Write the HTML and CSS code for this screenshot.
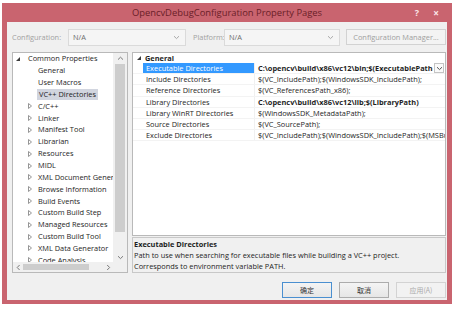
FILE: index.html
```html
<!DOCTYPE html>
<html>
<head>
<meta charset="utf-8">
<link rel="stylesheet" href="styles.css">
</head>
<body>
<div class="window">
  <div class="titlebar">
    <span></span>
    <span class="title">OpencvDebugConfiguration Property Pages</span>
    <span class="tb-controls"><span class="tb-help">?</span><span class="tb-close">×</span></span>
  </div>
  <div class="content">
    <div class="config-row">
      <span class="lbl">Configuration:</span>
      <div class="combo combo-config"><span>N/A</span><svg class="chev" width="7" height="5" viewBox="0 0 7 5"><path d="M1 1.2 L3.5 3.6 L6 1.2" fill="none" stroke="#a8a8a8" stroke-width="1"/></svg></div>
      <span class="lbl lbl-platform">Platform:</span>
      <div class="combo combo-platform"><span>N/A</span><svg class="chev" width="7" height="5" viewBox="0 0 7 5"><path d="M1 1.2 L3.5 3.6 L6 1.2" fill="none" stroke="#a8a8a8" stroke-width="1"/></svg></div>
      <div class="btn btn-cfgmgr">Configuration Manager...</div>
    </div>
    <div class="main">
      <div class="tree-panel">
        <div class="tree-view">
          <div class="tree-list">
            <div class="node lvl0"><svg class="tw" width="8" height="8" viewBox="0 0 8 8"><polygon points="6,2 6,6 2,6" fill="#3c3c3c"/></svg><span class="nt">Common Properties</span></div>
            <div class="node lvl1"><span class="tw-empty"></span><span class="nt">General</span></div>
            <div class="node lvl1"><span class="tw-empty"></span><span class="nt">User Macros</span></div>
            <div class="node lvl1"><span class="tw-empty"></span><span class="nt sel">VC++ Directories</span></div>
            <div class="node lvl1"><svg class="tw" width="8" height="8" viewBox="0 0 8 8"><polygon points="2.5,1.5 5.5,4 2.5,6.5" fill="none" stroke="#8a8a8a" stroke-width="0.9"/></svg><span class="nt">C/C++</span></div>
            <div class="node lvl1"><svg class="tw" width="8" height="8" viewBox="0 0 8 8"><polygon points="2.5,1.5 5.5,4 2.5,6.5" fill="none" stroke="#8a8a8a" stroke-width="0.9"/></svg><span class="nt">Linker</span></div>
            <div class="node lvl1"><svg class="tw" width="8" height="8" viewBox="0 0 8 8"><polygon points="2.5,1.5 5.5,4 2.5,6.5" fill="none" stroke="#8a8a8a" stroke-width="0.9"/></svg><span class="nt">Manifest Tool</span></div>
            <div class="node lvl1"><svg class="tw" width="8" height="8" viewBox="0 0 8 8"><polygon points="2.5,1.5 5.5,4 2.5,6.5" fill="none" stroke="#8a8a8a" stroke-width="0.9"/></svg><span class="nt">Librarian</span></div>
            <div class="node lvl1"><svg class="tw" width="8" height="8" viewBox="0 0 8 8"><polygon points="2.5,1.5 5.5,4 2.5,6.5" fill="none" stroke="#8a8a8a" stroke-width="0.9"/></svg><span class="nt">Resources</span></div>
            <div class="node lvl1"><svg class="tw" width="8" height="8" viewBox="0 0 8 8"><polygon points="2.5,1.5 5.5,4 2.5,6.5" fill="none" stroke="#8a8a8a" stroke-width="0.9"/></svg><span class="nt">MIDL</span></div>
            <div class="node lvl1"><svg class="tw" width="8" height="8" viewBox="0 0 8 8"><polygon points="2.5,1.5 5.5,4 2.5,6.5" fill="none" stroke="#8a8a8a" stroke-width="0.9"/></svg><span class="nt">XML Document Generator</span></div>
            <div class="node lvl1"><svg class="tw" width="8" height="8" viewBox="0 0 8 8"><polygon points="2.5,1.5 5.5,4 2.5,6.5" fill="none" stroke="#8a8a8a" stroke-width="0.9"/></svg><span class="nt">Browse Information</span></div>
            <div class="node lvl1"><svg class="tw" width="8" height="8" viewBox="0 0 8 8"><polygon points="2.5,1.5 5.5,4 2.5,6.5" fill="none" stroke="#8a8a8a" stroke-width="0.9"/></svg><span class="nt">Build Events</span></div>
            <div class="node lvl1"><svg class="tw" width="8" height="8" viewBox="0 0 8 8"><polygon points="2.5,1.5 5.5,4 2.5,6.5" fill="none" stroke="#8a8a8a" stroke-width="0.9"/></svg><span class="nt">Custom Build Step</span></div>
            <div class="node lvl1"><svg class="tw" width="8" height="8" viewBox="0 0 8 8"><polygon points="2.5,1.5 5.5,4 2.5,6.5" fill="none" stroke="#8a8a8a" stroke-width="0.9"/></svg><span class="nt">Managed Resources</span></div>
            <div class="node lvl1"><svg class="tw" width="8" height="8" viewBox="0 0 8 8"><polygon points="2.5,1.5 5.5,4 2.5,6.5" fill="none" stroke="#8a8a8a" stroke-width="0.9"/></svg><span class="nt">Custom Build Tool</span></div>
            <div class="node lvl1"><svg class="tw" width="8" height="8" viewBox="0 0 8 8"><polygon points="2.5,1.5 5.5,4 2.5,6.5" fill="none" stroke="#8a8a8a" stroke-width="0.9"/></svg><span class="nt">XML Data Generator</span></div>
            <div class="node lvl1"><svg class="tw" width="8" height="8" viewBox="0 0 8 8"><polygon points="2.5,1.5 5.5,4 2.5,6.5" fill="none" stroke="#8a8a8a" stroke-width="0.9"/></svg><span class="nt">Code Analysis</span></div>
          </div>
          <div class="vscroll">
            <div class="sb-arrow"><svg width="7" height="5" viewBox="0 0 7 5"><path d="M1 3.6 L3.5 1.2 L6 3.6" fill="none" stroke="#7a7a7a" stroke-width="1"/></svg></div>
            <div class="vthumb"></div>
            <div class="vtrack"></div>
            <div class="sb-arrow"><svg width="7" height="5" viewBox="0 0 7 5"><path d="M1 1.2 L3.5 3.6 L6 1.2" fill="none" stroke="#7a7a7a" stroke-width="1"/></svg></div>
          </div>
        </div>
        <div class="hscroll">
          <div class="sb-harrow"><svg width="5" height="7" viewBox="0 0 5 7"><path d="M3.6 1 L1.2 3.5 L3.6 6" fill="none" stroke="#7a7a7a" stroke-width="1"/></svg></div>
          <div class="hthumb"></div>
          <div class="htrack"></div>
          <div class="sb-harrow"><svg width="5" height="7" viewBox="0 0 5 7"><path d="M1.2 1 L3.6 3.5 L1.2 6" fill="none" stroke="#7a7a7a" stroke-width="1"/></svg></div>
          <div class="corner"></div>
        </div>
      </div>
      <div class="right-col">
        <div class="grid">
          <div class="cat"><svg class="tw" width="8" height="8" viewBox="0 0 8 8"><polygon points="6,2 6,6 2,6" fill="#3c3c3c"/></svg><span class="cat-name">General</span></div>
          <div class="prow selected"><span class="gutter"></span><span class="pname">Executable Directories</span><span class="pval bold">C:\opencv\build\x86\vc12\bin;$(ExecutablePath</span><span class="ddbtn"><svg width="7" height="5" viewBox="0 0 7 5"><path d="M1 1.2 L3.5 3.6 L6 1.2" fill="none" stroke="#555" stroke-width="1"/></svg></span></div>
          <div class="prow"><span class="gutter"></span><span class="pname">Include Directories</span><span class="pval">$(VC_IncludePath);$(WindowsSDK_IncludePath);</span></div>
          <div class="prow"><span class="gutter"></span><span class="pname">Reference Directories</span><span class="pval">$(VC_ReferencesPath_x86);</span></div>
          <div class="prow"><span class="gutter"></span><span class="pname">Library Directories</span><span class="pval bold">C:\opencv\build\x86\vc12\lib;$(LibraryPath)</span></div>
          <div class="prow"><span class="gutter"></span><span class="pname">Library WinRT Directories</span><span class="pval">$(WindowsSDK_MetadataPath);</span></div>
          <div class="prow"><span class="gutter"></span><span class="pname">Source Directories</span><span class="pval">$(VC_SourcePath);</span></div>
          <div class="prow"><span class="gutter"></span><span class="pname">Exclude Directories</span><span class="pval">$(VC_IncludePath);$(WindowsSDK_IncludePath);$(MSBuild_ExecutablePath);</span></div>
        </div>
        <div class="desc">
          <div class="desc-title">Executable Directories</div>
          <div class="desc-text">Path to use when searching for executable files while building a VC++ project.</div>
          <div class="desc-text">Corresponds to environment variable PATH.</div>
        </div>
      </div>
    </div>
    <div class="footer">
      <div class="btn dbtn default">确定</div>
      <div class="btn dbtn">取消</div>
      <div class="btn dbtn disabled">应用(A)</div>
    </div>
  </div>
</div>
</body>
</html>
```

FILE: styles.css
```css
* { box-sizing: border-box; }
html, body { margin: 0; padding: 0; background: #ffffff; }
body {
  font-family: "Open Sans", "Noto Sans CJK SC", sans-serif;
  font-size: 7.4px;
  color: #1e1e1e;
  width: 458px;
  height: 311px;
  overflow: hidden;
}
.window {
  margin: 3px 0 0 2px;
  width: 450px;
  height: 301px;
  background: #c9646f;
  padding: 0 5px 4px 5px;
  display: flex;
  flex-direction: column;
}
.titlebar {
  height: 19px;
  flex: none;
  display: grid;
  grid-template-columns: 1fr auto 1fr;
  align-items: center;
}
.title {
  font-size: 9.4px;
  color: #6a2028;
  white-space: nowrap;
}
.tb-controls {
  justify-self: end;
  display: flex;
  align-items: center;
  color: #fbe6e8;
  font-size: 9px;
  font-weight: 700;
}
.tb-help { width: 16px; text-align: center; }
.tb-close { width: 22px; text-align: center; font-size: 10px; }

.content {
  flex: 1;
  min-height: 0;
  background: #f0f0f0;
  padding: 6px 1px 0 5px;
  display: flex;
  flex-direction: column;
}
.config-row {
  height: 18px;
  flex: none;
  display: flex;
  align-items: center;
}
.lbl { color: #a2a2a2; width: 56px; flex: none; white-space: nowrap; }
.lbl-platform { width: 31px; margin-left: 7px; }
.combo {
  height: 17px;
  flex: none;
  border: 1px solid #dadada;
  background: #f5f5f5;
  display: flex;
  align-items: center;
  justify-content: space-between;
  padding: 0 5px 0 4px;
  color: #6e6e6e;
}
.combo-config { width: 118px; }
.combo-platform { width: 116px; }
.btn {
  display: flex;
  align-items: center;
  justify-content: center;
  border: 1px solid #d2d2d2;
  background: #f3f3f3;
  white-space: nowrap;
  flex: none;
}
.btn-cfgmgr {
  margin-left: auto;
  width: 100px;
  height: 16px;
  color: #a0a0a0;
}
.main {
  margin-top: 6px;
  height: 221px;
  flex: none;
  display: flex;
  gap: 4px;
}
.tree-panel {
  width: 116px;
  flex: none;
  border: 1px solid #b9b9b9;
  background: #ffffff;
  display: flex;
  flex-direction: column;
  overflow: hidden;
}
.tree-view {
  flex: 1;
  display: flex;
  min-height: 0;
}
.tree-list {
  flex: 1;
  min-width: 0;
  overflow: hidden;
}
.node {
  height: 11.85px;
  display: flex;
  align-items: center;
  white-space: nowrap;
  color: #1e1e1e;
}
.lvl0 { padding-left: 1px; }
.lvl0 .tw { margin-right: 5px; }
.lvl1 { padding-left: 13px; }
.lvl1 .tw, .tw-empty { width: 8px; margin-right: 3px; flex: none; }
.tw { flex: none; }
.nt { padding: 0 1px; line-height: 11px; }
.nt.sel { background: #d1d5df; padding: 0 2px; }
.vscroll {
  width: 14px;
  flex: none;
  display: flex;
  flex-direction: column;
  background: #f0f0f0;
}
.sb-arrow {
  height: 10px;
  flex: none;
  display: flex;
  align-items: center;
  justify-content: center;
}
.vthumb { margin: 1px 2px 0 2px; height: 168px; flex: none; background: #cdcdcd; }
.vtrack { flex: 1; }
.hscroll {
  height: 10px;
  flex: none;
  display: flex;
  background: #f0f0f0;
}
.sb-harrow {
  width: 10px;
  flex: none;
  display: flex;
  align-items: center;
  justify-content: center;
}
.hthumb { width: 66px; flex: none; margin: 2px 0; background: #cdcdcd; }
.htrack { flex: 1; }
.corner { width: 14px; flex: none; background: #f0f0f0; }

.right-col {
  flex: 1;
  min-width: 0;
  display: flex;
  flex-direction: column;
  gap: 1px;
}
.grid {
  flex: 1;
  min-height: 0;
  background: #ffffff;
  border: 1px solid #b9b9b9;
  overflow: hidden;
}
.cat {
  height: 9.5px;
  display: flex;
  align-items: center;
  padding-left: 2px;
  margin-top: 0.5px;
}
.cat .tw { margin-right: 2px; }
.cat-name { font-weight: 700; }
.prow {
  height: 11.2px;
  display: flex;
  align-items: center;
  white-space: nowrap;
  border-bottom: 1px solid #f3f3f3;
}
.gutter { width: 10px; flex: none; align-self: stretch; }
.pname {
  width: 112px;
  flex: none;
  align-self: stretch;
  display: flex;
  align-items: center;
  padding-left: 3px;
  border-right: 1px solid #f0f0f0;
}
.selected .pname { background: #3399ff; color: #ffffff; }
.pval { flex: 1; min-width: 0; padding-left: 3px; overflow: hidden; }
.bold { font-weight: 700; }
.ddbtn {
  width: 10px;
  height: 10px;
  flex: none;
  border: 1px solid #c4c4c4;
  background: #fafafa;
  display: flex;
  align-items: center;
  justify-content: center;
  margin-right: 1px;
}
.desc {
  height: 36px;
  flex: none;
  border: 1px solid #c8c8c8;
  background: #f0f0f0;
  padding: 1px 0 0 1px;
  white-space: nowrap;
  overflow: hidden;
}
.desc-title { font-weight: 700; line-height: 11px; }
.desc-text { line-height: 11px; }
.footer {
  flex: 1;
  display: flex;
  justify-content: flex-end;
  align-items: flex-start;
  padding-top: 9px;
  gap: 7px;
}
.dbtn {
  width: 50px;
  height: 16px;
  font-family: "Noto Sans CJK SC", sans-serif;
  font-size: 7px;
  background: linear-gradient(#f4f4f4, #e6e6e6);
  border-color: #acacac;
  color: #333333;
}
.dbtn.default { border-color: #4a8fd0; }
.dbtn.disabled { color: #ababab; border-color: #d3d3d3; background: #f2f2f2; }
```
